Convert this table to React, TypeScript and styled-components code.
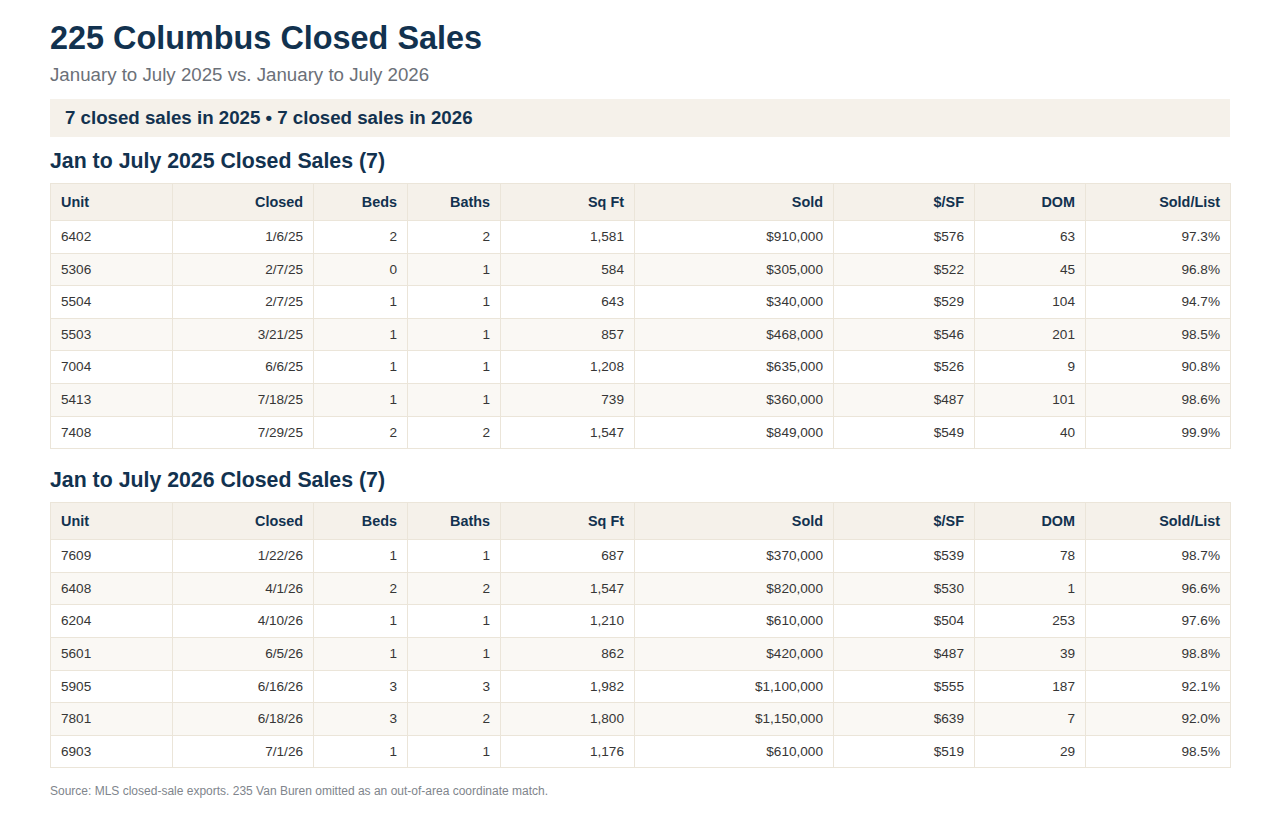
import React from "react";
import styled, { createGlobalStyle } from "styled-components";

const GlobalStyle = createGlobalStyle`
  html, body { margin: 0; padding: 0; background: #ffffff; }
  body { font-family: "Liberation Sans", Arial, Helvetica, sans-serif; color: #333333; }
`;

const Page = styled.div`
  padding: 20px 50px 20px 50px;
  display: flex;
  flex-direction: column;
`;

const Title = styled.h1`
  margin: 0;
  font-size: 32.4px;
  line-height: 37px;
  font-weight: 700;
  color: #12324f;
`;

const Subtitle = styled.p`
  margin: 7px 0 0 0;
  font-size: 18.7px;
  line-height: 22px;
  color: #6b7078;
`;

const Summary = styled.div`
  margin-top: 13px;
  background: #f5f1ea;
  padding: 9px 15px;
  font-size: 18.7px;
  line-height: 20px;
  font-weight: 700;
  color: #12324f;
`;

const SectionTitle = styled.h2<{ $first?: boolean }>`
  margin: ${(p) => (p.$first ? "12px" : "19px")} 0 10px 0;
  font-size: 21.3px;
  line-height: 24px;
  font-weight: 700;
  color: #12324f;
`;

const Table = styled.table`
  width: 100%;
  border-collapse: collapse;
  table-layout: fixed;
  font-size: 13.6px;
`;

const Th = styled.th<{ $align: "left" | "right" }>`
  background: #f5f1ea;
  color: #12324f;
  font-weight: 700;
  font-size: 14.4px;
  line-height: 16px;
  padding: 10px 10px;
  text-align: ${(p) => p.$align};
  border: 1px solid #ebe5d9;
`;

const Tr = styled.tr<{ $alt: boolean }>`
  background: ${(p) => (p.$alt ? "#faf8f4" : "#ffffff")};
`;

const Td = styled.td<{ $align: "left" | "right" }>`
  padding: 8px 10px;
  line-height: 15.6px;
  color: #363636;
  text-align: ${(p) => p.$align};
  border: 1px solid #ebe5d9;
`;

const Footer = styled.p`
  margin: 16px 0 0 0;
  font-size: 12px;
  line-height: 14px;
  color: #80858c;
`;

type Col = { label: string; width: number; align: "left" | "right" };

const columns: Col[] = [
  { label: "Unit", width: 122, align: "left" },
  { label: "Closed", width: 141, align: "right" },
  { label: "Beds", width: 94, align: "right" },
  { label: "Baths", width: 93, align: "right" },
  { label: "Sq Ft", width: 134, align: "right" },
  { label: "Sold", width: 199, align: "right" },
  { label: "$/SF", width: 141, align: "right" },
  { label: "DOM", width: 111, align: "right" },
  { label: "Sold/List", width: 145, align: "right" },
];

const sales2025: string[][] = [
  ["6402", "1/6/25", "2", "2", "1,581", "$910,000", "$576", "63", "97.3%"],
  ["5306", "2/7/25", "0", "1", "584", "$305,000", "$522", "45", "96.8%"],
  ["5504", "2/7/25", "1", "1", "643", "$340,000", "$529", "104", "94.7%"],
  ["5503", "3/21/25", "1", "1", "857", "$468,000", "$546", "201", "98.5%"],
  ["7004", "6/6/25", "1", "1", "1,208", "$635,000", "$526", "9", "90.8%"],
  ["5413", "7/18/25", "1", "1", "739", "$360,000", "$487", "101", "98.6%"],
  ["7408", "7/29/25", "2", "2", "1,547", "$849,000", "$549", "40", "99.9%"],
];

const sales2026: string[][] = [
  ["7609", "1/22/26", "1", "1", "687", "$370,000", "$539", "78", "98.7%"],
  ["6408", "4/1/26", "2", "2", "1,547", "$820,000", "$530", "1", "96.6%"],
  ["6204", "4/10/26", "1", "1", "1,210", "$610,000", "$504", "253", "97.6%"],
  ["5601", "6/5/26", "1", "1", "862", "$420,000", "$487", "39", "98.8%"],
  ["5905", "6/16/26", "3", "3", "1,982", "$1,100,000", "$555", "187", "92.1%"],
  ["7801", "6/18/26", "3", "2", "1,800", "$1,150,000", "$639", "7", "92.0%"],
  ["6903", "7/1/26", "1", "1", "1,176", "$610,000", "$519", "29", "98.5%"],
];

function SalesTable({ rows }: { rows: string[][] }) {
  return (
    <Table>
      <colgroup>
        {columns.map((c) => (
          <col key={c.label} style={{ width: c.width }} />
        ))}
      </colgroup>
      <thead>
        <tr>
          {columns.map((c) => (
            <Th key={c.label} $align={c.align}>
              {c.label}
            </Th>
          ))}
        </tr>
      </thead>
      <tbody>
        {rows.map((r, i) => (
          <Tr key={r[0]} $alt={i % 2 === 1}>
            {r.map((v, j) => (
              <Td key={j} $align={columns[j].align}>
                {v}
              </Td>
            ))}
          </Tr>
        ))}
      </tbody>
    </Table>
  );
}

export default function App() {
  return (
    <>
      <GlobalStyle />
      <Page>
        <Title>225 Columbus Closed Sales</Title>
        <Subtitle>January to July 2025 vs. January to July 2026</Subtitle>
        <Summary>7 closed sales in 2025 • 7 closed sales in 2026</Summary>
        <SectionTitle $first>Jan to July 2025 Closed Sales (7)</SectionTitle>
        <SalesTable rows={sales2025} />
        <SectionTitle>Jan to July 2026 Closed Sales (7)</SectionTitle>
        <SalesTable rows={sales2026} />
        <Footer>Source: MLS closed-sale exports. 235 Van Buren omitted as an out-of-area coordinate match.</Footer>
      </Page>
    </>
  );
}
